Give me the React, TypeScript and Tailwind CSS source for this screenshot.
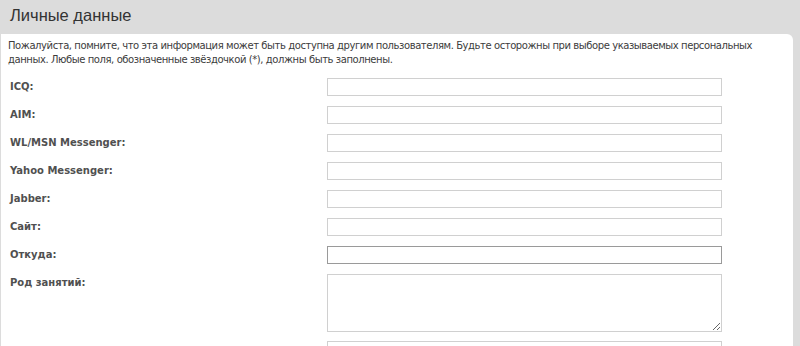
import React from 'react'

const fields = [
  { label: 'ICQ:' },
  { label: 'AIM:' },
  { label: 'WL/MSN Messenger:' },
  { label: 'Yahoo Messenger:' },
  { label: 'Jabber:' },
  { label: 'Сайт:' },
  { label: 'Откуда:', active: true },
]

const labelCls = 'w-[319px] pl-[2px] text-[10px] font-bold leading-[18px] text-[#505050]'
const inputCls = 'h-[18px] w-[395px] border border-[#d0d0d0] bg-white outline-none'

const App = () => {
  return (
    <div className="h-[346px] w-[800px] overflow-hidden bg-[#dcdcdc] font-['DejaVu_Sans',Verdana,sans-serif]">
      {/* Title */}
      <div className="h-[34px] pl-[10px] pt-[5px] font-['Liberation_Sans',Arial,sans-serif] text-[16.5px] leading-[20px] text-[#333]">
        Личные данные
      </div>

      {/* Panel */}
      <div className="ml-px mr-[7px] h-[312px] rounded-tr-[6px] bg-white pl-[7px] pt-[5px]">
        <p className="whitespace-nowrap text-[10px] leading-[14px] tracking-[-0.42px] text-[#3c3c3c]">
          Пожалуйста, помните, что эта информация может быть доступна другим пользователям. Будьте осторожны при выборе указываемых персональных
          <br />
          данных. Любые поля, обозначенные звёздочкой (*), должны быть заполнены.
        </p>

        <div className="mt-[11px] flex flex-col gap-[10px]">
          {fields.map((f) => (
            <div key={f.label} className="flex">
              <label className={labelCls}>{f.label}</label>
              <input
                type="text"
                className={
                  f.active
                    ? 'h-[18px] w-[395px] border border-[#9a9a9a] bg-white outline-none'
                    : inputCls
                }
              />
            </div>
          ))}

          <div className="flex">
            <label className={labelCls}>Род занятий:</label>
            <textarea className="block h-[58px] w-[395px] resize border border-[#d0d0d0] bg-white outline-none" />
          </div>

          <div className="-mt-px flex">
            <label className={labelCls}></label>
            <input type="text" className={inputCls} />
          </div>
        </div>
      </div>
    </div>
  )
}

export default App
